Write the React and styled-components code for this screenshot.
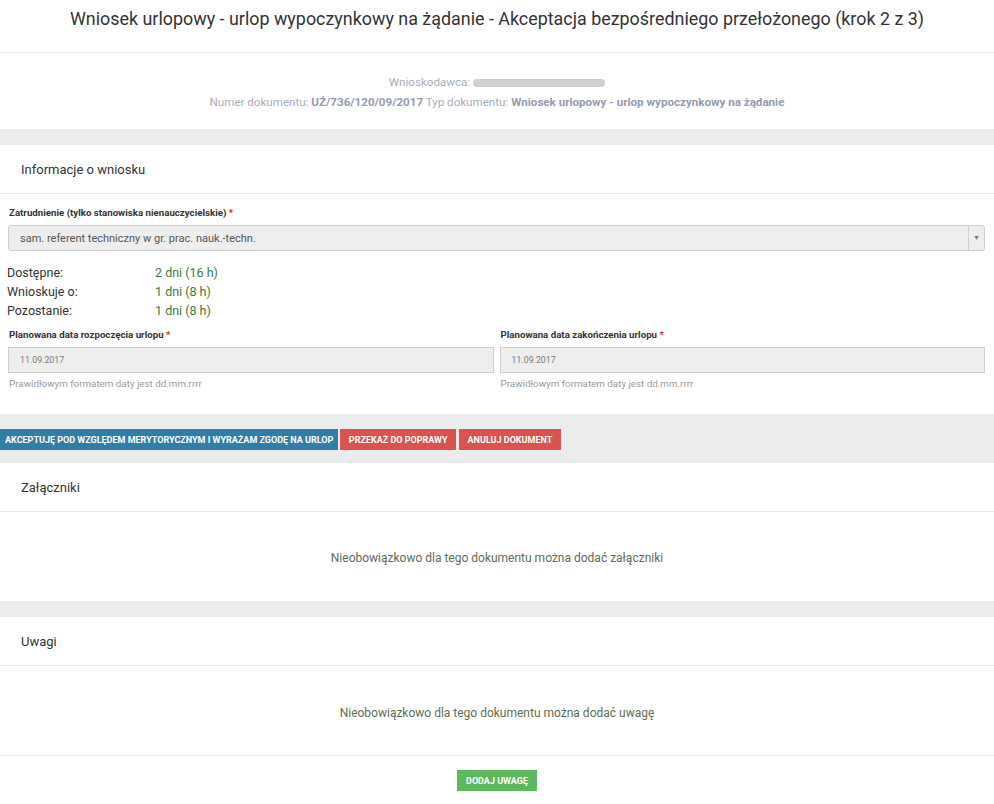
import React from "react";
import styled, { createGlobalStyle } from "styled-components";

const Global = createGlobalStyle`
  html, body { margin: 0; padding: 0; background: #fff; }
  body { font-family: Roboto, "Noto Sans", Arial, sans-serif; color: #333; }
  * { box-sizing: border-box; }
`;

const Page = styled.div`
  width: 994px;
  display: flex;
  flex-direction: column;
`;

const TitleBar = styled.header`
  height: 53px;
  border-bottom: 1px solid #e6e6e6;
  display: flex;
  align-items: center;
  justify-content: center;
  padding-bottom: 16px;
`;

const Title = styled.h1`
  margin: 0;
  font-size: 17.9px;
  font-weight: 400;
  color: #333;
`;

const Meta = styled.div`
  height: 76px;
  display: flex;
  flex-direction: column;
  align-items: center;
  padding-top: 22px;
  gap: 5px;
  font-size: 11.6px;
  color: #a9adb6;
`;

const MetaLine = styled.div`
  line-height: 15px;
`;

const MetaValue = styled.b`
  color: #959bb0;
  font-weight: 700;
`;

const Redacted = styled.span`
  display: inline-block;
  vertical-align: middle;
  width: 132px;
  height: 8px;
  margin-left: 3px;
  border-radius: 4px;
  background: #cfcfd2;
  filter: blur(0.6px);
`;

const Band = styled.div`
  background: #ebecee;
  height: ${(p) => p.$h}px;
`;

const ActionBand = styled.div`
  background: #ebecee;
  height: 49px;
  padding-top: 15px;
  display: flex;
  align-items: flex-start;
  gap: 2px;
`;

const Button = styled.button`
  border: none;
  margin: 0;
  height: 21px;
  padding: 0 ${(p) => p.$px || 10}px;
  background: ${(p) => p.$bg};
  color: #fff;
  font-family: Roboto, "Noto Sans", Arial, sans-serif;
  font-size: 9px;
  font-weight: 700;
  text-transform: uppercase;
  cursor: pointer;
  margin-left: ${(p) => p.$ml || 0}px;
`;

const PanelHeader = styled.div`
  height: 49px;
  border-bottom: 1px solid #e6e6e6;
  display: flex;
  align-items: center;
  padding-left: 21px;
  font-size: 13px;
  color: #333;
`;

const Form = styled.div`
  padding: 13px 9px 0 8px;
  height: 220px;
  display: flex;
  flex-direction: column;
`;

const Label = styled.div`
  font-size: 9.7px;
  font-weight: 700;
  color: #333;
  line-height: 12px;
  margin: 0 0 6px 1px;
`;

const Req = styled.span`
  color: #c9302c;
`;

const SelectBox = styled.div`
  height: 26px;
  border: 1px solid #cfcfcf;
  border-radius: 3px;
  background: #eee;
  display: flex;
  align-items: center;
  font-size: 11px;
  color: #555;
`;

const SelectText = styled.span`
  flex: 1;
  padding-left: 11px;
`;

const SelectArrow = styled.span`
  width: 16px;
  height: 100%;
  border-left: 1px solid #cfcfcf;
  display: flex;
  align-items: center;
  justify-content: center;
  font-size: 7px;
  color: #777;
`;

const Stats = styled.div`
  display: grid;
  grid-template-columns: 148px auto;
  margin: 12px 0 0 -1px;
  font-size: 12.5px;
  line-height: 19px;
  color: #333;
`;

const StatValue = styled.span`
  color: #3d7a3d;
`;

const DateGrid = styled.div`
  display: grid;
  grid-template-columns: 1fr 1fr;
  column-gap: 6px;
  margin-top: 9px;
`;

const Field = styled.div`
  display: flex;
  flex-direction: column;
`;

const Input = styled.div`
  height: 26px;
  border: 1px solid #d0d0d0;
  background: #eee;
  display: flex;
  align-items: center;
  padding-left: 11px;
  font-size: 8.8px;
  color: #7a7a7a;
`;

const Help = styled.div`
  font-size: 9.8px;
  color: #9a9a9a;
  margin: 5px 0 0 1px;
`;

const EmptyBody = styled.div`
  height: ${(p) => p.$h}px;
  display: flex;
  align-items: center;
  justify-content: center;
  font-size: 12px;
  color: #5d6e55;
  padding-top: ${(p) => p.$pt || 0}px;
  border-bottom: ${(p) => (p.$border ? "1px solid #e6e6e6" : "none")};
`;

const Footer = styled.div`
  height: 49px;
  display: flex;
  justify-content: center;
  padding-top: 14px;
`;

export default function App() {
  return (
    <Page>
      <Global />
      <TitleBar>
        <Title>
          Wniosek urlopowy - urlop wypoczynkowy na żądanie - Akceptacja
          bezpośredniego przełożonego (krok 2 z 3)
        </Title>
      </TitleBar>
      <Meta>
        <MetaLine>
          Wnioskodawca:<Redacted />
        </MetaLine>
        <MetaLine>
          Numer dokumentu: <MetaValue>UŹ/736/120/09/2017</MetaValue> Typ
          dokumentu:{" "}
          <MetaValue>Wniosek urlopowy - urlop wypoczynkowy na żądanie</MetaValue>
        </MetaLine>
      </Meta>
      <Band $h={16} />
      <PanelHeader>Informacje o wniosku</PanelHeader>
      <Form>
        <Label>
          Zatrudnienie (tylko stanowiska nienauczycielskie) <Req>*</Req>
        </Label>
        <SelectBox>
          <SelectText>sam. referent techniczny w gr. prac. nauk.-techn.</SelectText>
          <SelectArrow>▼</SelectArrow>
        </SelectBox>
        <Stats>
          <span>Dostępne:</span>
          <StatValue>2 dni (16 h)</StatValue>
          <span>Wnioskuje o:</span>
          <StatValue>1 dni (8 h)</StatValue>
          <span>Pozostanie:</span>
          <StatValue>1 dni (8 h)</StatValue>
        </Stats>
        <DateGrid>
          <Field>
            <Label>
              Planowana data rozpoczęcia urlopu <Req>*</Req>
            </Label>
            <Input>11.09.2017</Input>
            <Help>Prawidłowym formatem daty jest dd.mm.rrrr</Help>
          </Field>
          <Field>
            <Label>
              Planowana data zakończenia urlopu <Req>*</Req>
            </Label>
            <Input>11.09.2017</Input>
            <Help>Prawidłowym formatem daty jest dd.mm.rrrr</Help>
          </Field>
        </DateGrid>
      </Form>
      <ActionBand>
        <Button $bg="#2f7ea7" $px={5}>
          Akceptuję pod względem merytorycznym i wyrażam zgodę na urlop
        </Button>
        <Button $bg="#d9534f" $px={8.5}>
          Przekaż do poprawy
        </Button>
        <Button $bg="#d9534f" $px={8.5} $ml={1}>
          Anuluj dokument
        </Button>
      </ActionBand>
      <PanelHeader>Załączniki</PanelHeader>
      <EmptyBody $h={89} $pt={2}>
        Nieobowiązkowo dla tego dokumentu można dodać załączniki
      </EmptyBody>
      <Band $h={16} />
      <PanelHeader>Uwagi</PanelHeader>
      <EmptyBody $h={90} $pt={4} $border>
        Nieobowiązkowo dla tego dokumentu można dodać uwagę
      </EmptyBody>
      <Footer>
        <Button $bg="#5cb85c" $px={9.5}>
          Dodaj uwagę
        </Button>
      </Footer>
    </Page>
  );
}
